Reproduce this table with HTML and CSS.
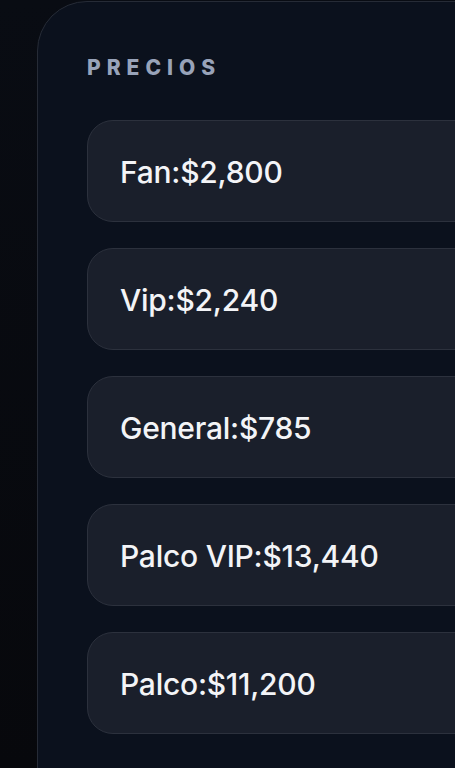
FILE: index.html
```html
<!DOCTYPE html>
<html lang="es">
<head>
<meta charset="utf-8">
<link rel="stylesheet" href="styles.css">
</head>
<body>
<div class="page">
  <section class="panel">
    <h2 class="label">PRECIOS</h2>
    <ul class="list">
      <li class="card">Fan:$2,800</li>
      <li class="card">Vip:$2,240</li>
      <li class="card">General:$785</li>
      <li class="card">Palco VIP:$13,440</li>
      <li class="card">Palco:$11,200</li>
    </ul>
  </section>
</div>
</body>
</html>
```
FILE: styles.css
```css
html, body {
  margin: 0;
  padding: 0;
  height: 100%;
  overflow: hidden;
}
body {
  background: linear-gradient(180deg, #090c13 0%, #07080c 100%);
  font-family: Inter, "Noto Sans", sans-serif;
}
.page {
  padding: 1px 0 0 37px;
}
.panel {
  width: 640px;
  min-height: 900px;
  box-sizing: border-box;
  background: #0b111d;
  border: 1px solid #262b36;
  border-radius: 50px 0 0 0;
  padding: 51px 0 0 49px;
}
.label {
  margin: 0;
  font-size: 21px;
  font-weight: 800;
  letter-spacing: 6px;
  color: #98a3b9;
  line-height: 30px;
}
.list {
  list-style: none;
  margin: 37px 0 0 0;
  padding: 0;
  display: flex;
  flex-direction: column;
  gap: 26px;
}
.card {
  display: flex;
  align-items: center;
  padding-left: 32px;
  padding-top: 2px;
  box-sizing: content-box;
  height: 98px;
  background: #1a1f2b;
  border: 1px solid #2c313d;
  border-radius: 26px;
  color: #f3f4f7;
  font-size: 30px;
  font-weight: 500;
  letter-spacing: -0.25px;
}
```
